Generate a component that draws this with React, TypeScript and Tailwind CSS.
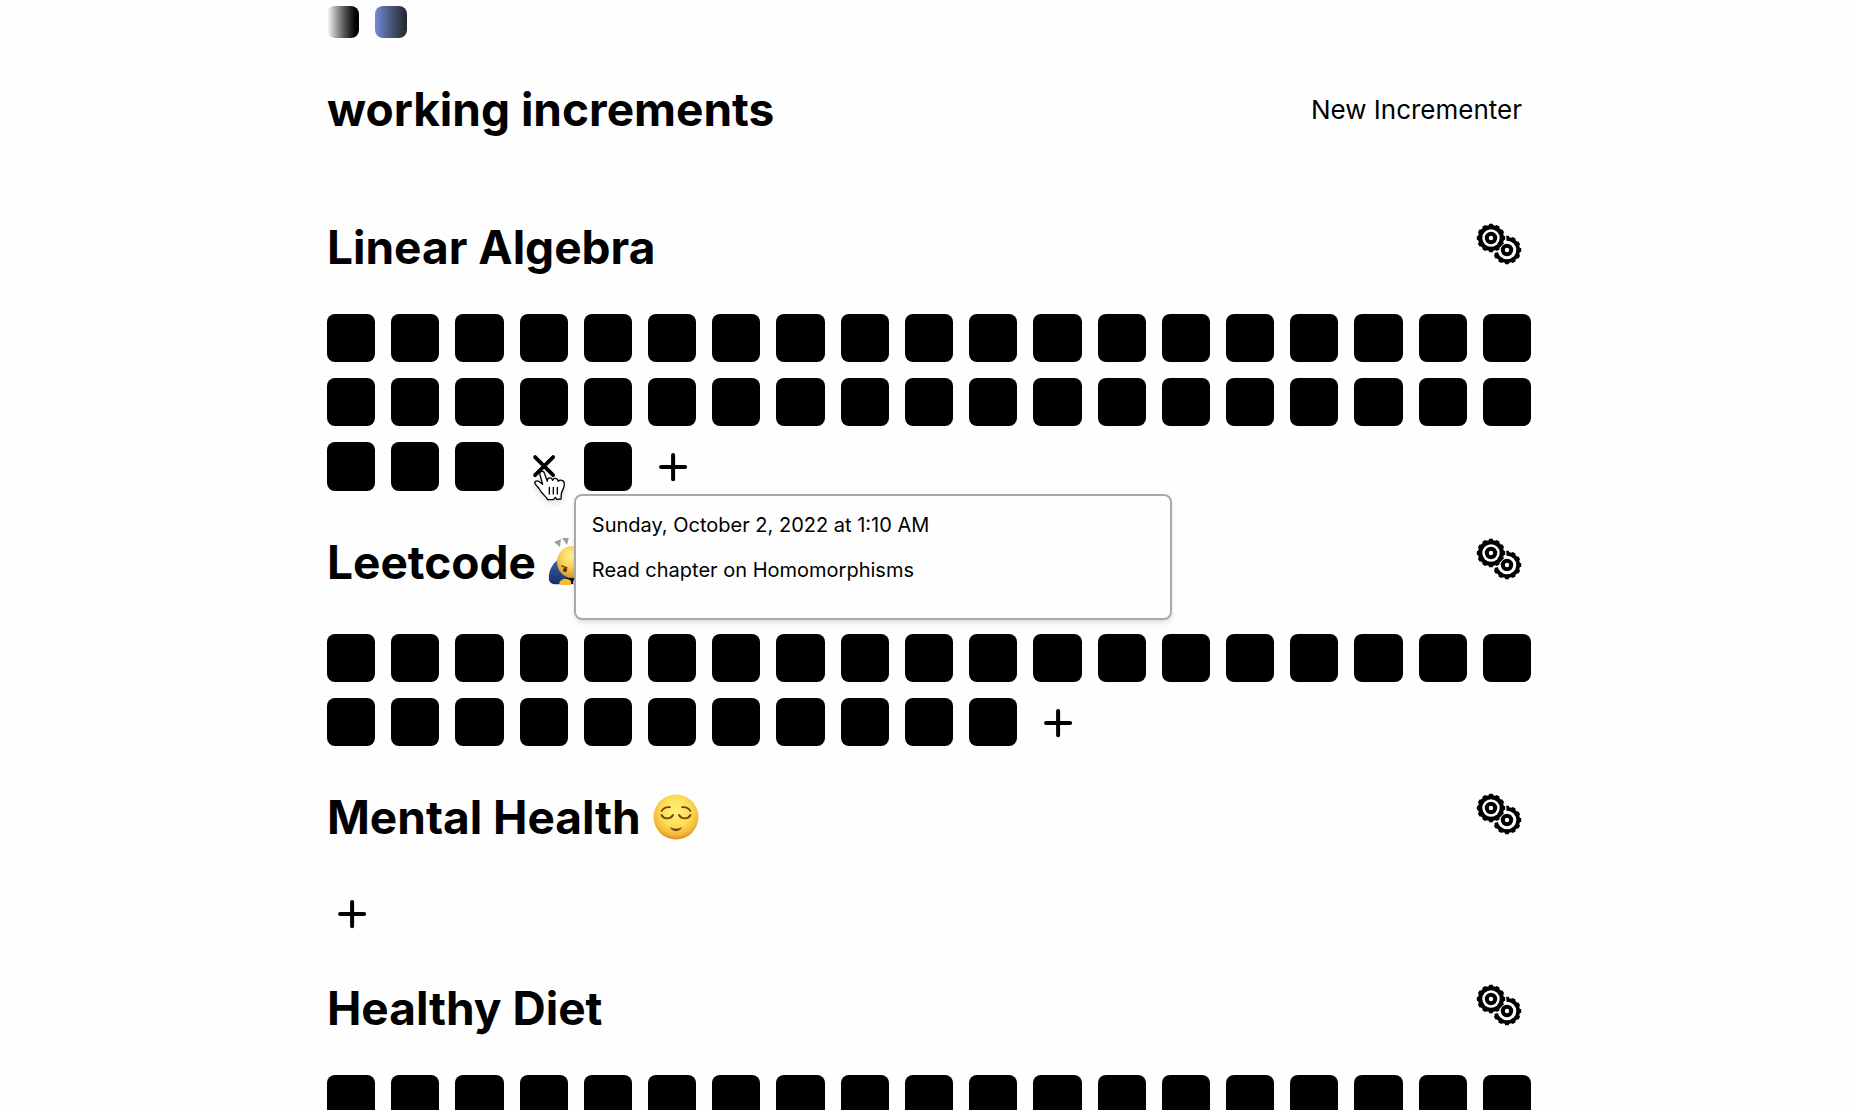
import React, { useId } from 'react';

type IncrementerData = {
  name: string;
  emoji?: 'bow' | 'relieved';
  count: number;
  hovered?: number;
  log?: { date: string; note: string };
};

const incrementers: IncrementerData[] = [
  {
    name: 'Linear Algebra',
    count: 43,
    hovered: 41,
    log: { date: 'Sunday, October 2, 2022 at 1:10 AM', note: 'Read chapter on Homomorphisms' },
  },
  { name: 'Leetcode', emoji: 'bow', count: 30 },
  { name: 'Mental Health', emoji: 'relieved', count: 0 },
  { name: 'Healthy Diet', count: 38 },
];

function gearPath(cx: number, cy: number, outer: number, inner: number, teeth: number) {
  const pts: string[] = [];
  const step = (Math.PI * 2) / teeth;
  for (let i = 0; i < teeth; i++) {
    const a = i * step - Math.PI / 2;
    [
      [-0.34, inner],
      [-0.22, outer],
      [0.22, outer],
      [0.34, inner],
    ].forEach(([o, r]) => {
      pts.push(`${(cx + Math.cos(a + o * step) * r).toFixed(2)} ${(cy + Math.sin(a + o * step) * r).toFixed(2)}`);
    });
  }
  return `M${pts.join('L')}Z`;
}

function GearsIcon() {
  const id = useId();
  return (
    <svg viewBox="0 0 46 42" className="h-[42px] w-[46px]" aria-hidden="true">
      <defs>
        <mask id={id} maskUnits="userSpaceOnUse" x="0" y="0" width="46" height="42">
          <rect width="46" height="42" fill="#fff" />
          <path d="M31 27L30 8H5V33Z" fill="#000" />
        </mask>
      </defs>
      <g mask={`url(#${id})`}>
        <path d={gearPath(31, 27, 14.3, 13, 12)} />
        <circle cx="31" cy="27" r="9.3" fill="#fefefe" />
      </g>
      <path d={gearPath(15, 15, 14.3, 13, 12)} />
      <circle cx="15" cy="15" r="8.7" fill="#fefefe" />
      <circle cx="15" cy="15" r="4.2" fill="none" stroke="#000" strokeWidth="4" />
      <circle cx="31" cy="27" r="7" fill="#fefefe" />
      <circle cx="31" cy="27" r="4.2" fill="none" stroke="#000" strokeWidth="4" />
    </svg>
  );
}

function PlusIcon() {
  return (
    <svg viewBox="0 0 48 48" className="size-full" fill="none" stroke="currentColor" strokeWidth="4" strokeLinecap="round" aria-hidden="true">
      <path d="M25 13v24M13 25h24" />
    </svg>
  );
}

function CrossIcon() {
  return (
    <svg viewBox="0 0 48 48" className="size-full" fill="none" stroke="currentColor" strokeWidth="3.8" strokeLinecap="round" aria-hidden="true">
      <path d="M15 15l18 18M33 15L15 33" />
    </svg>
  );
}

function HandCursor() {
  return (
    <svg
      viewBox="100 145 102 108"
      className="pointer-events-none absolute left-[13px] top-[26px] z-20 h-9 w-[34px] drop-shadow-md"
      aria-hidden="true"
    >
      <path
        d="M121 166c-3-13 11-15 14-4l8 23c-1-12 13-14 16-3 3-9 15-7 17 3 4-6 18-4 18 8 0 13-6 18-9 29l-1 16-13 1-4-6-6 7h-17c-6-10-13-15-19-23-5-7-9-14-16-21-8-8 0-16 10-10l10 8z"
        fill="#fff"
        stroke="#000"
        strokeWidth="4"
        strokeLinejoin="round"
      />
      <path d="M149 203v20M161 203v20M173 203v20" stroke="#000" strokeWidth="4" strokeLinecap="round" />
    </svg>
  );
}

function RelievedFace() {
  const id = useId();
  return (
    <svg viewBox="0 0 46 46" className="size-[46px]" role="img" aria-label="relieved face">
      <defs>
        <radialGradient id={id} cx="0.5" cy="0.38" r="0.62">
          <stop offset="0" stopColor="#fff27a" />
          <stop offset="0.55" stopColor="#fbdc55" />
          <stop offset="0.85" stopColor="#f3b535" />
          <stop offset="1" stopColor="#dc8f24" />
        </radialGradient>
      </defs>
      <circle cx="23" cy="23" r="22.5" fill={`url(#${id})`} />
      <g fill="none" stroke="#74410f" strokeLinecap="round">
        <path d="M8.500 17c2-3 5-4.300 8.500-3.800M37.500 17c-2-3-5-4.300-8.500-3.800" strokeWidth="1.700" />
        <path d="M8.500 21c2.500 4.500 9 4.500 11.500 0M26 21c2.500 4.500 9 4.500 11.500 0" strokeWidth="1.900" />
      </g>
      <path d="M17 33c3.500 2.300 8.500 2.300 12 0-1.500 5.500-10.500 5.500-12 0z" fill="#74410f" />
    </svg>
  );
}

function BowingMan() {
  const id = useId();
  return (
    <svg viewBox="0 0 48 48" className="size-12" role="img" aria-label="man bowing">
      <defs>
        <radialGradient id={`${id}-skin`} cx="0.5" cy="0.3" r="0.7">
          <stop offset="0" stopColor="#fff0a0" />
          <stop offset="0.5" stopColor="#fbd55a" />
          <stop offset="1" stopColor="#d9962a" />
        </radialGradient>
        <linearGradient id={`${id}-coat`} x1="0" y1="0" x2="0" y2="1">
          <stop offset="0" stopColor="#3a66a8" />
          <stop offset="1" stopColor="#152f66" />
        </linearGradient>
      </defs>
      <path d="M6 4l7-3-1 8zM14 0l7-1-2 8zM42 4l-7-3 1 8zM34 0l-7-1 2 8z" fill="#a0a0a0" />
      <path d="M1 42C0 32 5 25 12 20H36C43 25 48 32 47 42 45 48 38 46 34 46H14C10 46 3 48 1 42z" fill={`url(#${id}-coat)`} />
      <ellipse cx="24" cy="24" rx="15" ry="16" fill={`url(#${id}-skin)`} />
      <path d="M14 28l5 2M34 28l-5 2" stroke="#74410f" strokeWidth="1.500" strokeLinecap="round" />
      <circle cx="17" cy="32" r="2" fill="#4a2a0c" />
      <circle cx="31" cy="32" r="2" fill="#4a2a0c" />
      <path d="M17 40h14v6H17z" fill="#10141f" />
      <path d="M11 45c2-4 7-6 12-2v4H13zM37 45c-2-4-7-6-12-2v4h10z" fill="#f5b93a" />
    </svg>
  );
}

function Incrementer({ name, emoji, count, hovered, log }: IncrementerData) {
  return (
    <section>
      <div
        className={
          emoji
            ? 'flex items-center justify-between pt-[42px] pr-[9px] pb-[43px]'
            : 'flex items-center justify-between pt-[42px] pr-[9px] pb-[38px]'
        }
      >
        <h2 className="flex h-[58px] items-center gap-3 text-[46px] leading-[58px] font-bold">
          {name}
          {emoji === 'bow' && <BowingMan />}
          {emoji === 'relieved' && <RelievedFace />}
        </h2>
        <button type="button" aria-label={`${name} settings`} className="pb-1.5">
          <GearsIcon />
        </button>
      </div>
      <div className="grid grid-cols-[repeat(auto-fill,minmax(48px,1fr))] gap-4">
        {Array.from({ length: count }, (_, i) =>
          i === hovered && log ? (
            <div key={i} className="relative aspect-square">
              <button type="button" aria-label="Remove increment" className="block size-full">
                <CrossIcon />
              </button>
              <HandCursor />
              <div
                role="tooltip"
                className="absolute top-full left-full z-10 mt-[3px] ml-1.5 flex h-[126px] w-[598px] flex-col gap-4 rounded-lg border-2 border-[#a9a9a9] bg-[#fefefe] px-4 py-[15px] text-xl leading-[29px] shadow-md"
              >
                <p>{log.date}</p>
                <p>{log.note}</p>
              </div>
            </div>
          ) : (
            <button key={i} type="button" aria-label={`Increment ${i + 1}`} className="aspect-square rounded-lg bg-black" />
          ),
        )}
        <button type="button" aria-label={`Add to ${name}`} className="aspect-square">
          <PlusIcon />
        </button>
      </div>
    </section>
  );
}

export default function App() {
  return (
    <div className="h-screen overflow-hidden bg-[#fefefe] font-['Inter',sans-serif] text-black">
      <main className="mx-auto max-w-[1206px] pl-0.5">
        <div className="flex gap-4 pt-1.5">
          <button type="button" aria-label="Light theme" className="size-8 rounded-lg bg-linear-to-r from-white to-black" />
          <button type="button" aria-label="Indigo theme" className="size-8 rounded-lg bg-linear-to-r from-[#7289da] to-[#23272a]" />
        </div>
        <header className="flex items-center justify-between pt-[42px] pr-[9px] pb-[38px]">
          <h1 className="text-[46px] leading-[58px] font-bold">working increments</h1>
          <button type="button" className="text-[26px]">
            New Incrementer
          </button>
        </header>
        {incrementers.map((item) => (
          <Incrementer key={item.name} {...item} />
        ))}
      </main>
    </div>
  );
}
